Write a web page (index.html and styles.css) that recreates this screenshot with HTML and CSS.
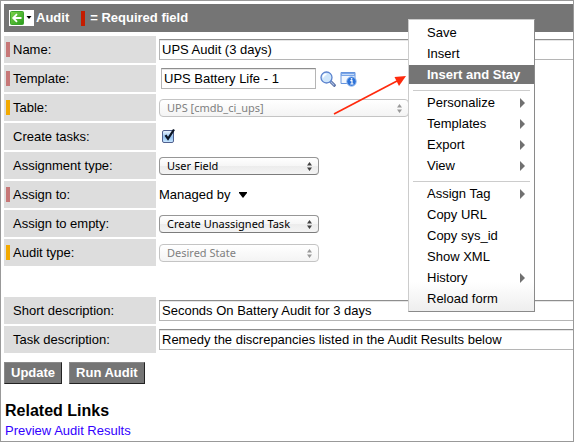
FILE: index.html
```html
<!DOCTYPE html>
<html lang="en">
<head>
<meta charset="utf-8">
<meta name="viewport" content="width=device-width, initial-scale=1">
<title>Audit</title>
<link rel="stylesheet" href="styles.css">
</head>
<body>
<main class="frame">
  <header class="titlebar">
    <button class="back" type="button" aria-label="Back">
      <svg width="25" height="16" viewBox="0 0 25 16" aria-hidden="true">
        <defs><linearGradient id="green" x1="0" y1="0" x2="1" y2="1"><stop offset="0" stop-color="#7ed44c"/><stop offset="1" stop-color="#279b1b"/></linearGradient></defs>
        <rect width="25" height="16" fill="#fff"/>
        <rect x="1.500" y="1.500" width="13" height="13" rx="1" fill="url(#green)" stroke="#3da52c"/>
        <path d="M12.500 8H4.500M8 4.200L4.200 8L8 11.800" fill="none" stroke="#fff" stroke-width="1.800"/>
        <path d="M17.500 6h5l-2.500 3z" fill="#000"/>
      </svg>
    </button>
    <h1 class="title">Audit</h1>
    <span class="legend"><span class="mark mark-legend"></span>= Required field</span>
  </header>

  <form class="form">
    <div class="row">
      <label class="label" for="name"><span class="mark mark-filled"></span>Name:</label>
      <div class="field"><input class="text" id="name" type="text" value="UPS Audit (3 days)"></div>
    </div>
    <div class="row">
      <label class="label" for="template"><span class="mark mark-filled"></span>Template:</label>
      <div class="field field-reference">
        <input class="text text-reference" id="template" type="text" value="UPS Battery Life - 1">
        <button class="icon" type="button" aria-label="Look up template">
          <svg width="16" height="16" viewBox="0 0 16 16" aria-hidden="true">
            <path d="M10 10L14.300 14.300" stroke="#47609a" stroke-width="3" stroke-linecap="round"/>
            <path d="M10.500 10.500L14 14" stroke="#a9bde3" stroke-width="1.200" stroke-linecap="round"/>
            <circle cx="6.500" cy="6.500" r="5.500" fill="#cfe6fb" stroke="#5b83ce" stroke-width="1.300"/>
            <path d="M3.200 6.500A3.400 3.400 0 0 1 6.500 3.200" fill="none" stroke="#fff" stroke-width="1.500"/>
          </svg>
        </button>
        <button class="icon" type="button" aria-label="Show template record">
          <svg width="17" height="16" viewBox="0 0 17 16" aria-hidden="true">
            <path d="M1 1.500h14v11H1z" fill="#f2f7fe" stroke="#6794dc"/>
            <path d="M1 2h14v3H1z" fill="#79a5e8"/>
            <path d="M2 3.500h12" stroke="#c5dbf8"/>
            <circle cx="11.500" cy="10.500" r="4.800" fill="#2d72d8" stroke="#a5c5f1"/>
            <path d="M10.300 9.700h1.700v3.300M10.300 13h3.200" fill="none" stroke="#fff" stroke-width="1.200"/>
            <circle cx="11.600" cy="7.800" r=".9" fill="#fff"/>
          </svg>
        </button>
      </div>
    </div>
    <div class="row">
      <label class="label" for="table"><span class="mark mark-readonly"></span>Table:</label>
      <div class="field"><span class="picker picker-wide"><select id="table" disabled><option>UPS [cmdb_ci_ups]</option></select><svg class="steps" width="5" height="9" viewBox="0 0 5 9" aria-hidden="true"><path d="M0 3.500L2.500 0L5 3.500zM0 5.500h5L2.500 9z"/></svg></span></div>
    </div>
    <div class="row">
      <label class="label" for="tasks"><span class="mark"></span>Create tasks:</label>
      <div class="field field-check">
        <input class="check" id="tasks" type="checkbox" checked>
        <svg class="tick" width="14" height="15" viewBox="0 0 14 15" aria-hidden="true"><path d="M3.500 7.200L6 10.800L12 1.500" fill="none" stroke="#0b1526" stroke-width="2.300"/></svg>
      </div>
    </div>
    <div class="row">
      <label class="label" for="assignment"><span class="mark"></span>Assignment type:</label>
      <div class="field"><span class="picker"><select id="assignment"><option>User Field</option></select><svg class="steps" width="5" height="9" viewBox="0 0 5 9" aria-hidden="true"><path d="M0 3.500L2.500 0L5 3.500zM0 5.500h5L2.500 9z"/></svg></span></div>
    </div>
    <div class="row">
      <label class="label" for="assign"><span class="mark mark-filled"></span>Assign to:</label>
      <div class="field"><button class="chooser" id="assign" type="button">Managed by<svg width="8" height="6" viewBox="0 0 8 6" aria-hidden="true"><path d="M0 0h8v1L4 6L0 1z"/></svg></button></div>
    </div>
    <div class="row">
      <label class="label" for="empty"><span class="mark"></span>Assign to empty:</label>
      <div class="field"><span class="picker"><select id="empty"><option>Create Unassigned Task</option></select><svg class="steps" width="5" height="9" viewBox="0 0 5 9" aria-hidden="true"><path d="M0 3.500L2.500 0L5 3.500zM0 5.500h5L2.500 9z"/></svg></span></div>
    </div>
    <div class="row">
      <label class="label" for="type"><span class="mark mark-readonly"></span>Audit type:</label>
      <div class="field"><span class="picker"><select id="type" disabled><option>Desired State</option></select><svg class="steps" width="5" height="9" viewBox="0 0 5 9" aria-hidden="true"><path d="M0 3.500L2.500 0L5 3.500zM0 5.500h5L2.500 9z"/></svg></span></div>
    </div>
    <div class="row row-section">
      <label class="label" for="short"><span class="mark"></span>Short description:</label>
      <div class="field"><input class="text" id="short" type="text" value="Seconds On Battery Audit for 3 days"></div>
    </div>
    <div class="row">
      <label class="label" for="long"><span class="mark"></span>Task description:</label>
      <div class="field"><input class="text" id="long" type="text" value="Remedy the discrepancies listed in the Audit Results below"></div>
    </div>
    <div class="actions">
      <button class="action" type="button">Update</button>
      <button class="action" type="button">Run Audit</button>
    </div>
  </form>

  <section class="related">
    <h2>Related Links</h2>
    <a href="#preview">Preview Audit Results</a>
  </section>

  <div class="menu" role="menu">
    <button type="button" role="menuitem">Save</button>
    <button type="button" role="menuitem">Insert</button>
    <button class="current" type="button" role="menuitem">Insert and Stay</button>
    <hr>
    <button class="parent" type="button" role="menuitem">Personalize</button>
    <button class="parent" type="button" role="menuitem">Templates</button>
    <button class="parent" type="button" role="menuitem">Export</button>
    <button class="parent" type="button" role="menuitem">View</button>
    <hr>
    <button class="parent" type="button" role="menuitem">Assign Tag</button>
    <button type="button" role="menuitem">Copy URL</button>
    <button type="button" role="menuitem">Copy sys_id</button>
    <button type="button" role="menuitem">Show XML</button>
    <button class="parent" type="button" role="menuitem">History</button>
    <button type="button" role="menuitem">Reload form</button>
  </div>

  <svg class="pointer" width="74" height="42" viewBox="0 0 74 42" aria-hidden="true">
    <path d="M1 39L64 6" stroke="#ff2a0d" stroke-width="1.700"/>
    <path d="M73 1L61.500 2L66 11z" fill="#ff2a0d"/>
  </svg>
</main>
</body>
</html>
```

FILE: styles.css
```css
* {
  box-sizing: border-box;
}

body {
  margin: 0;
  background: #fff;
  color: #000;
  font: 13px/20px "Liberation Sans", Arial, sans-serif;
}

button,
input {
  font: inherit;
  color: inherit;
}

button {
  border: 0;
  padding: 0;
  background: none;
}

svg {
  display: block;
}

.frame {
  position: relative;
  min-height: 100vh;
  padding: 3px 0 0 3px;
  border: 1px solid #999;
  overflow: hidden;
}

.titlebar {
  display: flex;
  align-items: center;
  height: 28px;
  padding-left: 5px;
  background: #757575;
  color: #fff;
  font-weight: bold;
}

.title {
  margin: 0 12px 0 2px;
  font-size: 13px;
}

.legend {
  display: flex;
  align-items: center;
  gap: 5px;
}

.mark {
  flex: none;
  width: 4px;
  height: 15px;
}

.mark-legend {
  background: #c41c00;
}

.mark-filled {
  background: #c77777;
}

.mark-readonly {
  background: #f2a900;
}

.form {
  display: flex;
  flex-direction: column;
  gap: 2px;
  padding-top: 4px;
}

.row {
  display: grid;
  grid-template-columns: 152px 1fr;
  gap: 3px;
  height: 27px;
}

.row-section {
  margin-top: 29px;
}

.label {
  display: flex;
  align-items: center;
  gap: 3px;
  padding-left: 2px;
  background: #ddd;
}

.field {
  display: flex;
  align-items: center;
}

.text {
  width: 100%;
  height: 21px;
  padding: 0 2px;
  border: 1px solid #b5b5b5;
  border-top-color: #8e8e8e;
  border-right: 0;
  border-radius: 0;
  background: #fff;
  box-shadow: inset 0 1px #e6e6e6;
}

.field-reference {
  gap: 4px;
  padding-left: 2px;
}

.text-reference {
  width: 155px;
  border-right: 1px solid #b5b5b5;
}

.picker {
  display: inline-flex;
  position: relative;
  width: 160px;
}

.picker-wide {
  width: 250px;
}

.picker select {
  width: 100%;
  height: 18px;
  padding: 0 20px 0 7px;
  border: 1px solid #969696;
  border-bottom-color: #7c7c7c;
  border-radius: 4px;
  background: linear-gradient(#fff, #f6f6f6 50%, #ececec 51%, #f4f4f4);
  color: #000;
  font: 11px/16px "Noto Sans", "Open Sans", sans-serif;
  appearance: none;
}

.picker select:disabled {
  border-color: #c4c4c4;
  background: linear-gradient(#fff, #f4f4f4);
  color: #808080;
  opacity: 1;
}

.steps {
  position: absolute;
  top: 5px;
  right: 7px;
  fill: #404040;
  pointer-events: none;
}

select:disabled + .steps {
  fill: #999;
}

.field-check {
  position: relative;
  padding-left: 3px;
}

.check {
  width: 12px;
  height: 13px;
  margin: 0;
  border: 1px solid #50608e;
  border-radius: 2px;
  background: linear-gradient(#eaf4fe, #92c0f0 55%, #c6e6ff);
  appearance: none;
}

.tick {
  position: absolute;
  left: 3px;
  top: 5px;
  pointer-events: none;
}

.chooser {
  display: flex;
  align-items: center;
  gap: 8px;
}

.actions {
  display: flex;
  gap: 7px;
  padding-top: 7px;
}

.action {
  height: 22px;
  padding: 0 6px;
  border: 1px solid #8a8a8a;
  border-right-color: #222;
  border-bottom-color: #222;
  background: #757575;
  color: #fff;
  font-weight: bold;
}

.related {
  padding: 17px 0 0 1px;
}

.related h2 {
  margin: 0;
  font-size: 16px;
  line-height: 20px;
}

.related a {
  color: #30f;
  text-decoration: none;
}

.menu {
  position: absolute;
  left: 407px;
  top: 18px;
  width: 127px;
  padding: 2px 0;
  border: 1px solid #ccc;
  border-right-color: #8a8a8a;
  border-bottom-color: #8a8a8a;
  background: linear-gradient(#fff 90%, #eee);
}

.menu button {
  display: flex;
  align-items: center;
  justify-content: space-between;
  width: 100%;
  height: 21px;
  padding: 0 9px 0 18px;
  white-space: nowrap;
}

.menu .current {
  background: #757575;
  background-clip: padding-box;
  border: solid transparent;
  border-width: 1px 0;
  color: #fff;
  font-weight: bold;
}

.menu .parent::after {
  content: "";
  border: solid transparent;
  border-width: 5px 0 5px 5px;
  border-left-color: #707070;
}

.menu hr {
  height: 1px;
  margin: 5px 4px 1px;
  border: 0;
  background: #ccc;
}

.pointer {
  position: absolute;
  left: 332px;
  top: 74px;
  pointer-events: none;
}
```
